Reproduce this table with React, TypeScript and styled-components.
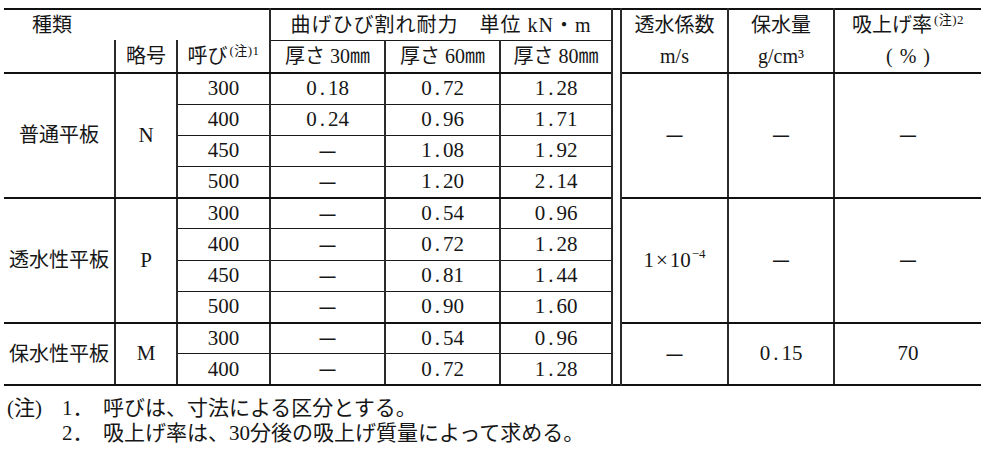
import React from "react";
import styled, { createGlobalStyle } from "styled-components";

const GlobalStyle = createGlobalStyle`
  html, body {
    margin: 0;
    padding: 0;
    background: #fff;
  }
  body {
    font-family: "Liberation Serif", "Noto Sans CJK JP", serif;
    color: #161616;
  }
`;

const Page = styled.div`
  padding: 8px 0 0 4px;
  width: 977px;
`;

const Table = styled.table`
  width: 977px;
  table-layout: fixed;
  border-collapse: collapse;
  border-top: 2px solid #111;
  border-bottom: 2px solid #111;
  font-size: 21px;
`;

const Row = styled.tr<{ $h: number }>`
  height: ${(p) => p.$h}px;
`;

type Rule = "thin" | "thick";

const Cell = styled.td<{ $bl?: boolean; $bb?: Rule; $align?: "left" | "center" }>`
  padding: 0;
  text-align: ${(p) => p.$align ?? "center"};
  vertical-align: middle;
  line-height: 1;
  white-space: nowrap;
  border-left: ${(p) => (p.$bl ? "2px solid #2a2a2a" : "none")};
  border-bottom: ${(p) =>
    p.$bb === "thick" ? "2px solid #111" : p.$bb === "thin" ? "1px solid #1a1a1a" : "none"};
`;

const HeadCell = styled(Cell)`
  font-size: 20px;
`;

const KindHead = styled(HeadCell)`
  padding-left: 28px;
`;

const TitleHead = styled(HeadCell)`
  letter-spacing: 1px;
`;

const NameCell = styled(Cell)`
  font-size: 20px;
`;

const Spacer = styled.td`
  padding: 0;
  border-left: 2px solid #2a2a2a;
  border-right: 2px solid #2a2a2a;
`;

const Sup = styled.span`
  font-size: 13px;
  vertical-align: 8px;
  line-height: 0;
  margin-left: 2px;
  letter-spacing: 0.5px;
`;

const Paren = styled.span`
  letter-spacing: 7px;
  margin-right: -7px;
`;

const Dot = styled.span`
  margin: 0 3px;
`;

const Dash = styled.span`
  font-family: "Noto Sans CJK JP", sans-serif;
  font-size: 20px;
  font-weight: 500;
`;

const Exp = styled.span`
  font-size: 13px;
  vertical-align: 9px;
  line-height: 0;
  margin-left: 1px;
`;

const Times = styled.span`
  margin: 0 2px;
`;

const Notes = styled.div`
  display: grid;
  grid-template-columns: 55px 41px auto;
  margin-top: 10px;
  padding-left: 3px;
  font-size: 21px;
  line-height: 25px;
`;

type Value = string | null;

interface Group {
  name: string;
  code: string;
  rows: [string, Value, Value, Value][];
  perm: React.ReactNode;
  water: React.ReactNode;
  absorb: React.ReactNode;
}

const num = (v: Value): React.ReactNode => {
  if (v === null) return <Dash>—</Dash>;
  const [a, b] = v.split(".");
  if (b === undefined) return v;
  return (
    <>
      {a}
      <Dot>.</Dot>
      {b}
    </>
  );
};

const groups: Group[] = [
  {
    name: "普通平板",
    code: "N",
    rows: [
      ["300", "0.18", "0.72", "1.28"],
      ["400", "0.24", "0.96", "1.71"],
      ["450", null, "1.08", "1.92"],
      ["500", null, "1.20", "2.14"],
    ],
    perm: <Dash>—</Dash>,
    water: <Dash>—</Dash>,
    absorb: <Dash>—</Dash>,
  },
  {
    name: "透水性平板",
    code: "P",
    rows: [
      ["300", null, "0.54", "0.96"],
      ["400", null, "0.72", "1.28"],
      ["450", null, "0.81", "1.44"],
      ["500", null, "0.90", "1.60"],
    ],
    perm: (
      <>
        1<Times>×</Times>10<Exp>−4</Exp>
      </>
    ),
    water: <Dash>—</Dash>,
    absorb: <Dash>—</Dash>,
  },
  {
    name: "保水性平板",
    code: "M",
    rows: [
      ["300", null, "0.54", "0.96"],
      ["400", null, "0.72", "1.28"],
    ],
    perm: <Dash>—</Dash>,
    water: num("0.15"),
    absorb: "70",
  },
];

const widths = [111, 62, 93, 115, 115, 112, 9, 107, 106, 147];

const App: React.FC = () => {
  let first = true;
  return (
    <Page>
      <GlobalStyle />
      <Table>
        <colgroup>
          {widths.map((w, i) => (
            <col key={i} style={{ width: w }} />
          ))}
        </colgroup>
        <thead>
          <Row $h={31}>
            <KindHead colSpan={3} $align="left">
              種類
            </KindHead>
            <TitleHead colSpan={3} $bl $bb="thin">
              曲げひび割れ耐力　単位 kN・m
            </TitleHead>
            <Spacer rowSpan={2} />
            <HeadCell>透水係数</HeadCell>
            <HeadCell $bl>保水量</HeadCell>
            <HeadCell $bl>
              吸上げ率<Sup>(注)2</Sup>
            </HeadCell>
          </Row>
          <Row $h={33}>
            <HeadCell $bb="thick" />
            <HeadCell $bl $bb="thick">
              略号
            </HeadCell>
            <HeadCell $bl $bb="thick">
              呼び<Sup>(注)1</Sup>
            </HeadCell>
            <HeadCell $bl $bb="thick">
              厚さ 30㎜
            </HeadCell>
            <HeadCell $bl $bb="thick">
              厚さ 60㎜
            </HeadCell>
            <HeadCell $bl $bb="thick">
              厚さ 80㎜
            </HeadCell>
            <HeadCell $bb="thick">m/s</HeadCell>
            <HeadCell $bl $bb="thick">
              g/cm³
            </HeadCell>
            <HeadCell $bl $bb="thick">
              <Paren>(%)</Paren>
            </HeadCell>
          </Row>
        </thead>
        <tbody>
          {groups.map((g) =>
            g.rows.map((r, i) => {
              const last = i === g.rows.length - 1;
              const rule: Rule = last ? "thick" : "thin";
              const lead = i === 0;
              const spacer = first;
              first = false;
              return (
                <Row $h={31.2} key={g.code + r[0]}>
                  {lead && (
                    <>
                      <NameCell rowSpan={g.rows.length} $bb="thick">
                        {g.name}
                      </NameCell>
                      <Cell rowSpan={g.rows.length} $bl $bb="thick">
                        {g.code}
                      </Cell>
                    </>
                  )}
                  <Cell $bl $bb={rule}>
                    {r[0]}
                  </Cell>
                  <Cell $bl $bb={rule}>
                    {num(r[1])}
                  </Cell>
                  <Cell $bl $bb={rule}>
                    {num(r[2])}
                  </Cell>
                  <Cell $bl $bb={rule}>
                    {num(r[3])}
                  </Cell>
                  {spacer && <Spacer rowSpan={10} />}
                  {lead && (
                    <>
                      <Cell rowSpan={g.rows.length} $bb="thick">
                        {g.perm}
                      </Cell>
                      <Cell rowSpan={g.rows.length} $bl $bb="thick">
                        {g.water}
                      </Cell>
                      <Cell rowSpan={g.rows.length} $bl $bb="thick">
                        {g.absorb}
                      </Cell>
                    </>
                  )}
                </Row>
              );
            })
          )}
        </tbody>
      </Table>
      <Notes>
        <span>(注)</span>
        <span>1．</span>
        <span>呼びは、寸法による区分とする。</span>
        <span />
        <span>2．</span>
        <span>吸上げ率は、30分後の吸上げ質量によって求める。</span>
      </Notes>
    </Page>
  );
};

export default App;
